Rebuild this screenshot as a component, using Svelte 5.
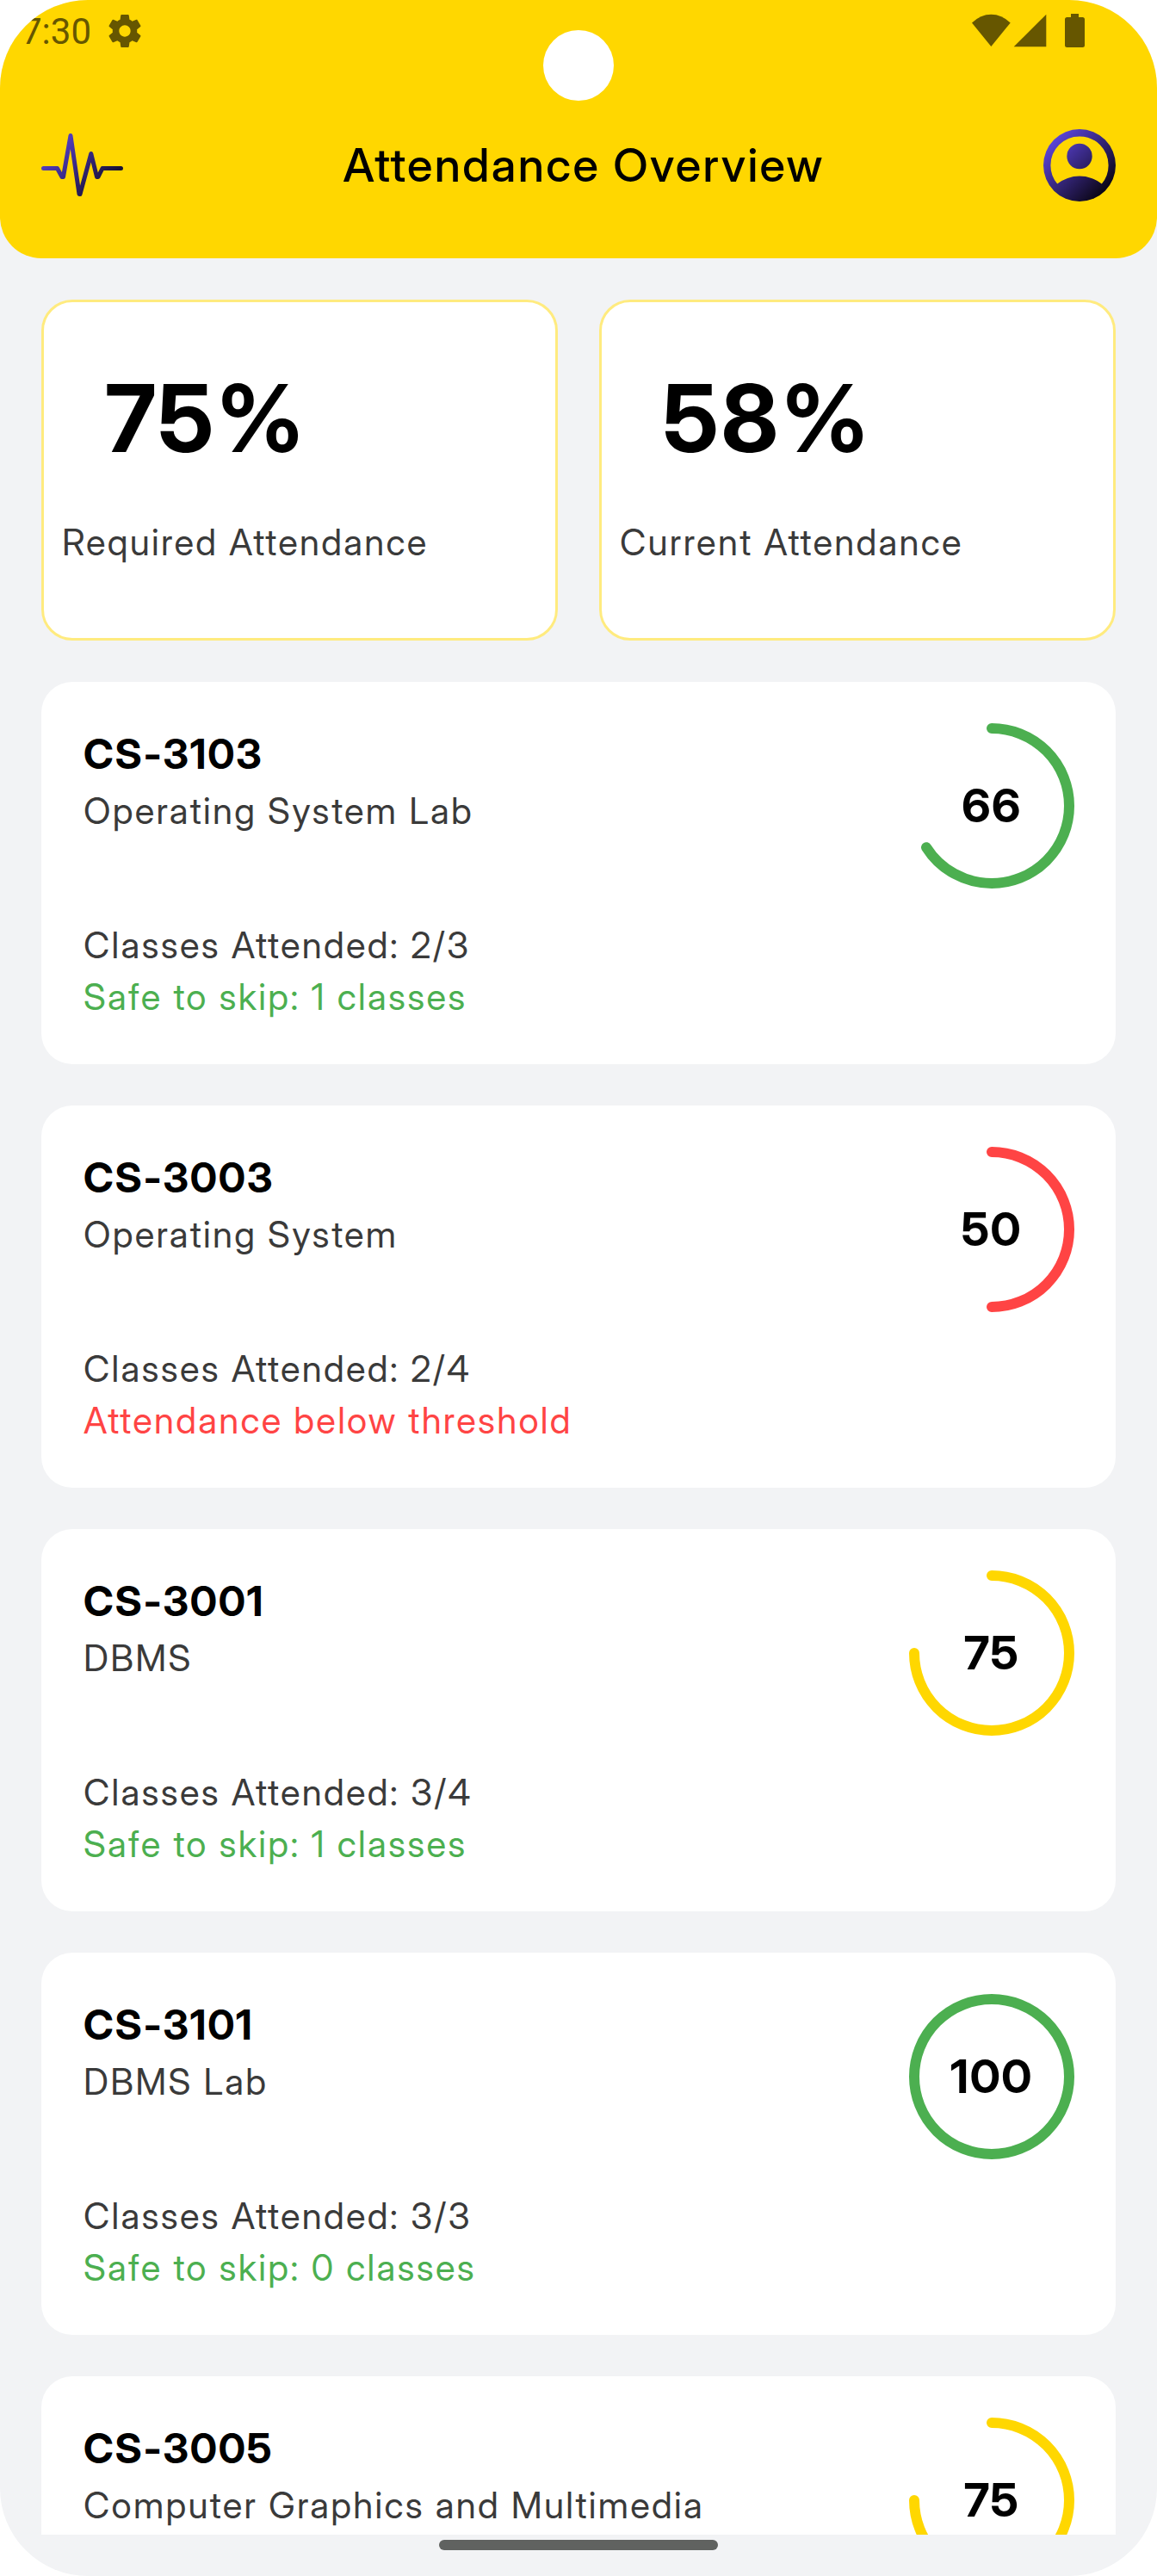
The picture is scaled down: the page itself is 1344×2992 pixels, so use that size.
<script>
  const summary = [
    { value: '75%', label: 'Required Attendance' },
    { value: '58%', label: 'Current Attendance' }
  ];

  const courses = [
    { code: 'CS-3103', name: 'Operating System Lab', attended: '2/3', note: 'Safe to skip: 1 classes', safe: true, percent: 66, ring: '#4caf50' },
    { code: 'CS-3003', name: 'Operating System', attended: '2/4', note: 'Attendance below threshold', safe: false, percent: 50, ring: '#ff4444' },
    { code: 'CS-3001', name: 'DBMS', attended: '3/4', note: 'Safe to skip: 1 classes', safe: true, percent: 75, ring: '#ffd700' },
    { code: 'CS-3101', name: 'DBMS Lab', attended: '3/3', note: 'Safe to skip: 0 classes', safe: true, percent: 100, ring: '#4caf50' },
    { code: 'CS-3005', name: 'Computer Graphics and Multimedia', percent: 75, ring: '#ffd700' }
  ];
</script>

<div class="screen">
  <header>
    <div class="status">
      <div class="status-left">
        <span class="time">7:30</span>
        <svg class="gear" viewBox="2 2 20 20">
          <path d="M19.43 12.98c.04-.32.07-.64.07-.98s-.03-.66-.07-.98l2.11-1.65c.19-.15.24-.42.12-.64l-2-3.46c-.12-.22-.39-.3-.61-.22l-2.49 1c-.52-.4-1.08-.73-1.69-.98l-.38-2.65C14.46 2.18 14.25 2 14 2h-4c-.25 0-.46.18-.49.42l-.38 2.65c-.61.25-1.17.59-1.69.98l-2.49-1c-.23-.09-.49 0-.61.22l-2 3.46c-.13.22-.07.49.12.64l2.11 1.65c-.04.32-.07.65-.07.98s.03.66.07.98l-2.11 1.65c-.19.15-.24.42-.12.64l2 3.46c.12.22.39.3.61.22l2.49-1c.52.4 1.08.73 1.69.98l.38 2.65c.03.24.24.42.49.42h4c.25 0 .46-.18.49-.42l.38-2.65c.61-.25 1.17-.59 1.69-.98l2.49 1c.23.09.49 0 .61-.22l2-3.46c.12-.22.07-.49-.12-.64l-2.11-1.65zM12 15.5c-1.93 0-3.5-1.57-3.5-3.5s1.57-3.5 3.5-3.5 3.5 1.57 3.5 3.5-1.57 3.5-3.5 3.5z" />
        </svg>
      </div>
      <svg class="signals" viewBox="0 0 132 40">
        <path d="M0 10.500Q10 .7 22.300 .7T44.700 10.500L22.300 38Z" />
        <path d="M48.700 38.300L86.300 .7V38.300Z" />
        <path d="M115 0h9v4h4.500a2.500 2.500 0 0 1 2.500 2.500v30a2.500 2.500 0 0 1-2.500 2.500h-18a2.500 2.500 0 0 1-2.500-2.500v-30a2.500 2.500 0 0 1 2.500-2.500h4.500z" />
      </svg>
    </div>
    <div class="bar">
      <svg class="pulse" viewBox="0 0 96 76">
        <defs>
          <linearGradient id="pulse-ink" gradientUnits="userSpaceOnUse" x1="12" y1="8" x2="76" y2="64">
            <stop offset="0" stop-color="#5b43d6" />
            <stop offset="1" stop-color="#160f2e" />
          </linearGradient>
        </defs>
        <path d="M2.500 41.500H18.500L24 51.500H25.500L34 3.500L44 71.500H45L57.800 24.500L64.500 51.500H66L71 41.500H92.500" />
      </svg>
      <h1>Attendance Overview</h1>
      <svg class="account" viewBox="2 2 20 20">
        <defs>
          <linearGradient id="account-ink" gradientUnits="userSpaceOnUse" x1="5" y1="5" x2="19" y2="19">
            <stop offset="0" stop-color="#5b43d6" />
            <stop offset="1" stop-color="#0b0616" />
          </linearGradient>
        </defs>
        <path fill-rule="evenodd" d="M12 2a10 10 0 1 0 0 20a10 10 0 1 0 0-20zM5.850 17.100q1.275-.975 2.850-1.537T12 15t3.300.563t2.850 1.537q.875-1.025 1.363-2.325T20 12q0-3.325-2.337-5.662T12 4T6.338 6.338T4 12q0 1.475.488 2.775T5.850 17.100zM12 13a3.500 3.500 0 1 1 0-7a3.500 3.500 0 1 1 0 7z" />
      </svg>
    </div>
  </header>

  <main>
    <section class="summary">
      {#each summary as item}
        <article class="stat">
          <strong>{item.value}</strong>
          <span>{item.label}</span>
        </article>
      {/each}
    </section>

    {#each courses as course}
      <article class="course">
        <div class="info">
          <h2>{course.code}</h2>
          <p class="name">{course.name}</p>
          {#if course.attended}
            <p class="attended">Classes Attended: {course.attended}</p>
            <p class="note" class:safe={course.safe}>{course.note}</p>
          {/if}
        </div>
        <div class="ring">
          <svg viewBox="0 0 192 192">
            <circle cx="96" cy="96" r="90" pathLength="100" stroke={course.ring} stroke-dasharray="{course.percent} 100" transform="rotate(-90 96 96)" />
          </svg>
          <b>{course.percent}</b>
        </div>
      </article>
    {/each}
  </main>

  <footer><div class="handle"></div></footer>
  <div class="camera"></div>
</div>

<style>
  :global(body) {
    margin: 0;
    background: #fff;
  }

  .screen {
    position: relative;
    display: flex;
    flex-direction: column;
    width: 1344px;
    height: 2992px;
    overflow: hidden;
    border-radius: 102px;
    background: #f2f3f5;
    color: #3a3a3a;
    font-family: 'Inter Display', Inter, sans-serif;
    font-size: 42px;
    letter-spacing: 2.28px;
  }

  header {
    flex: none;
    box-sizing: border-box;
    height: 300px;
    border-radius: 0 0 48px 48px;
    background: #ffd700;
  }

  .status {
    display: flex;
    justify-content: space-between;
    height: 132px;
    padding: 0 83px 0 25px;
    fill: #665600;
    color: #665600;
  }

  .status-left {
    display: flex;
    gap: 20px;
  }

  .time {
    width: 81px;
    margin-top: 12px;
    font: 400 42px/50px Roboto, sans-serif;
    letter-spacing: 0;
    white-space: nowrap;
  }

  .gear {
    width: 38px;
    height: 38px;
    margin-top: 17px;
  }

  .signals {
    width: 132px;
    height: 40px;
    margin-top: 16px;
  }

  .bar {
    display: flex;
    align-items: center;
    justify-content: space-between;
    height: 120px;
    padding: 0 48px;
  }

  .pulse {
    width: 96px;
    height: 76px;
    fill: none;
    stroke: url(#pulse-ink);
    stroke-width: 5;
    stroke-linecap: round;
    stroke-linejoin: round;
  }

  h1 {
    margin: 0;
    color: #000;
    font-size: 54px;
    font-weight: 500;
    line-height: 72px;
    letter-spacing: 2.33px;
  }

  .account {
    width: 84px;
    height: 84px;
    fill: url(#account-ink);
  }

  main {
    display: flex;
    flex: none;
    flex-direction: column;
    gap: 48px;
    box-sizing: border-box;
    height: 2644px;
    padding: 48px 48px 0;
    overflow: hidden;
  }

  .summary {
    display: grid;
    flex: none;
    grid-template-columns: 1fr 1fr;
    gap: 48px;
  }

  .stat {
    display: flex;
    flex-direction: column;
    box-sizing: border-box;
    height: 396px;
    padding: 69px 21px 0;
    border: 3px solid #ffeb7f;
    border-radius: 36px;
    background: #fff;
  }

  .stat strong {
    padding-left: 50px;
    color: #000;
    font-size: 108px;
    font-weight: 700;
    line-height: 132px;
    letter-spacing: 3.2px;
  }

  .stat span {
    margin-top: 48px;
    line-height: 60px;
  }

  .course {
    display: flex;
    flex: none;
    justify-content: space-between;
    box-sizing: border-box;
    height: 444px;
    padding: 48px 48px 48px 49px;
    border-radius: 36px;
    background: #fff;
  }

  h2,
  p {
    margin: 0;
  }

  h2 {
    color: #000;
    font-size: 48px;
    font-weight: 700;
    line-height: 72px;
    letter-spacing: 1.7px;
  }

  p {
    line-height: 60px;
  }

  .attended {
    margin-top: 96px;
  }

  .note {
    color: #ff4444;
  }

  .note.safe {
    color: #4caf50;
  }

  .ring {
    display: grid;
    place-items: center;
    width: 192px;
    height: 192px;
  }

  .ring > * {
    grid-area: 1 / 1;
  }

  .ring svg {
    width: 192px;
    height: 192px;
  }

  .ring circle {
    fill: none;
    stroke-width: 12;
    stroke-linecap: round;
  }

  .ring b {
    color: #000;
    font-size: 54px;
    font-weight: 700;
    line-height: 72px;
    letter-spacing: 1.5px;
  }

  footer {
    display: flex;
    flex: 1;
    justify-content: center;
    padding-top: 6px;
  }

  .handle {
    width: 324px;
    height: 12px;
    border-radius: 6px;
    background: #606260;
  }

  /* Front camera cut-out lies over the header. */
  .camera {
    position: absolute;
    top: 35px;
    left: 631px;
    width: 82px;
    height: 82px;
    border-radius: 50%;
    background: #fff;
  }
</style>
